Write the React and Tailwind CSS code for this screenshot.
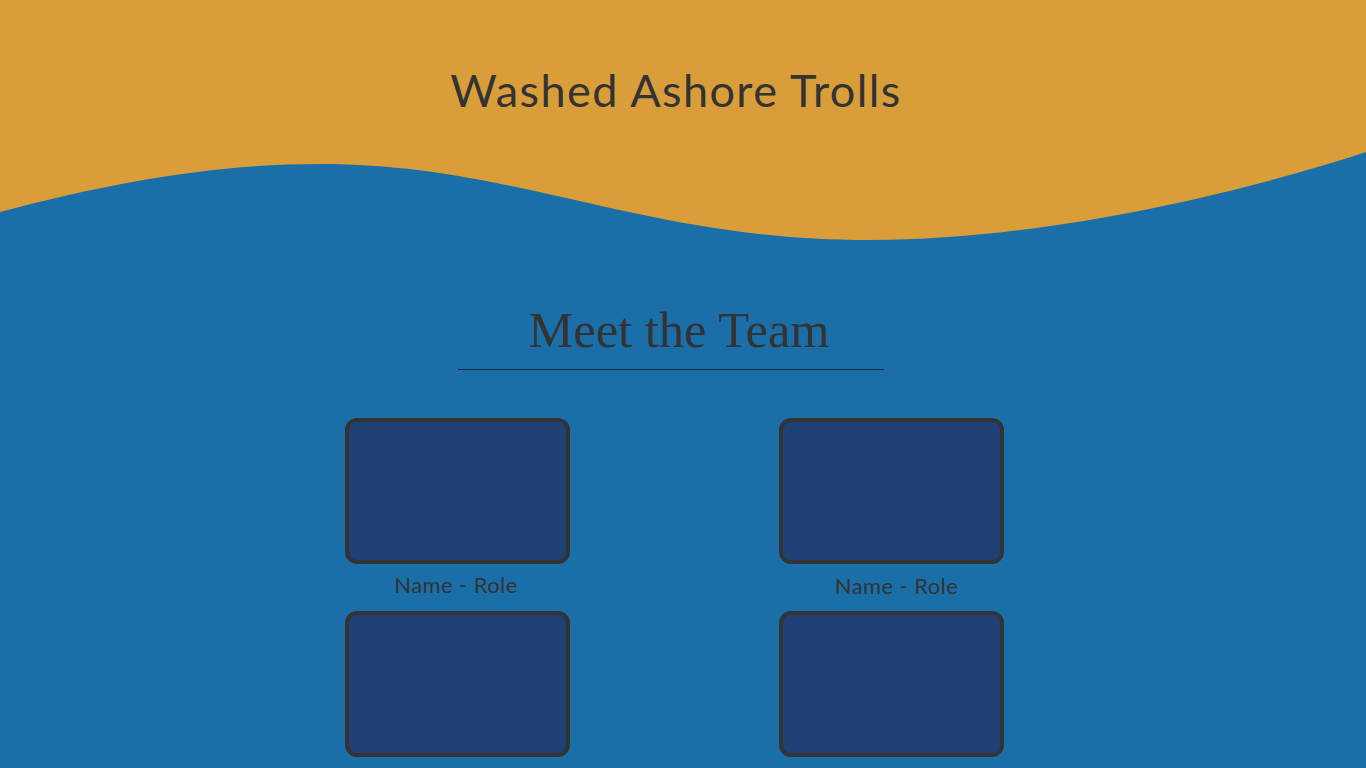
import React from "react";

function Card() {
  return (
    <div className="w-[225px] h-[146px] rounded-[12px] border-4 border-[#333333] bg-[#1f4176] box-border" />
  );
}

function Member({ shift = "" }) {
  return (
    <div className="flex flex-col items-center w-[225px]">
      <Card />
      <div className={`mt-[6px] h-[30px] text-[22px] leading-[30px] tracking-[0.4px] text-[#333333] font-['Lato',sans-serif] ${shift}`}>
        Name - Role
      </div>
    </div>
  );
}

export default function App() {
  return (
    <div className="min-h-[768px] w-full bg-[#1b6fa8] overflow-hidden">
      <header className="relative h-[250px]">
        <svg
          className="absolute inset-0"
          width="1366"
          height="250"
          viewBox="0 0 1366 250"
          preserveAspectRatio="none"
        >
          <path
            d="M0,212 C120,180 220,164 320,164 C520,164 640,240 870,240 C1050,240 1250,190 1366,152 L1366,0 L0,0 Z"
            fill="#d99e3a"
          />
        </svg>
        <h1 className="relative pt-[62px] pr-[14px] text-center text-[45px] leading-[56px] text-[#333333] font-['Lato',sans-serif] tracking-[1.4px]">
          Washed Ashore Trolls
        </h1>
      </header>
      <section className="flex flex-col items-center">
        <h2 className="mt-[50px] mr-[8px] text-[50.5px] leading-[60px] text-[#333333] font-['Liberation_Serif',serif]">
          Meet the Team
        </h2>
        <div className="mt-[9px] h-[1px] w-[426px] bg-[#0d2840] -ml-[24px]" />
      </section>
      <div className="mt-[48px] ml-[345px] flex gap-[209px]">
        <div className="flex flex-col">
          <Member shift="-ml-[3px]" />
          <div className="mt-[11px]">
            <Card />
          </div>
        </div>
        <div className="flex flex-col">
          <Member shift="ml-[10px] translate-y-[1px]" />
          <div className="mt-[11px]">
            <Card />
          </div>
        </div>
      </div>
    </div>
  );
}
